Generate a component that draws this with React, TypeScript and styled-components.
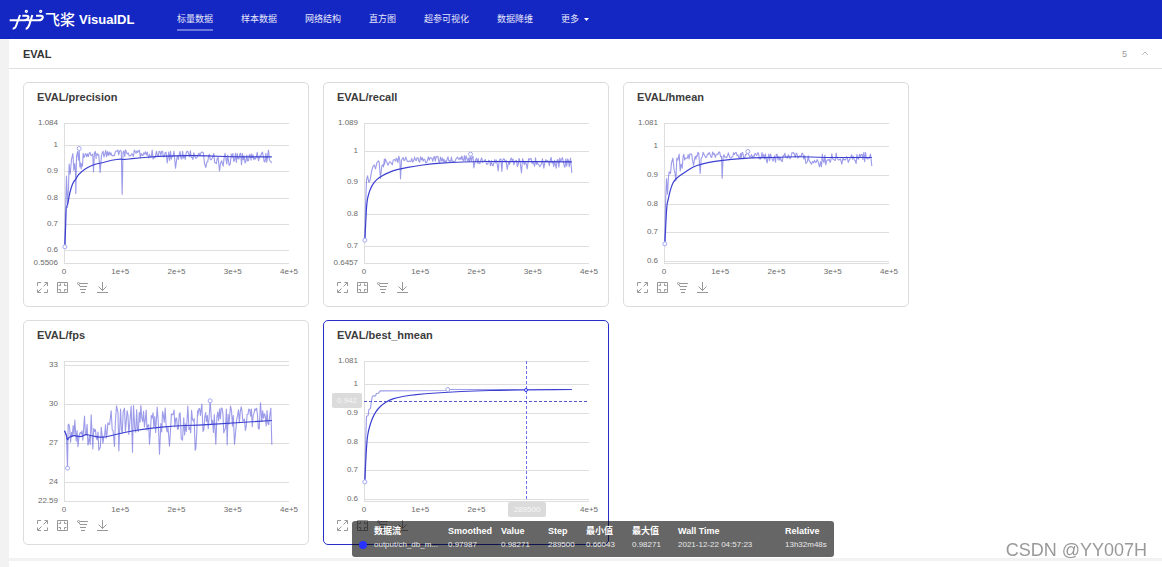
import React from 'react';
import styled, { createGlobalStyle } from 'styled-components';

const GlobalStyle = createGlobalStyle`
  * { box-sizing: border-box; }
  body {
    margin: 0;
    background: #f2f2f2;
    color: #333;
    font-family: "Liberation Sans", "Noto Sans CJK SC", sans-serif;
  }
  button { border: 0; padding: 0; background: none; font: inherit; color: inherit; cursor: pointer; }
`;

const Page = styled.div`
  display: flex;
  flex-direction: column;
  min-height: 100vh;
`;

const Header = styled.header`
  display: flex;
  align-items: center;
  height: 39px;
  padding: 0 9px;
  background: #1527c2;
  color: #fff;
`;

const Brand = styled.a`
  display: flex;
  align-items: center;
  width: 168px;
  color: #fff;
  text-decoration: none;
  white-space: nowrap;
`;

const BrandChinese = styled.span`
  margin: 0 4px 0 1px;
  font-size: 15px;
  line-height: 20px;
  font-weight: 500;
`;

const BrandName = styled.span`
  font-size: 13px;
  line-height: 20px;
  font-weight: 700;
`;

const Nav = styled.nav`
  display: flex;
  gap: 28px;
`;

const NavLink = styled.a<{ $active?: boolean }>`
  display: flex;
  align-items: center;
  gap: 5px;
  height: 22px;
  border-bottom: 2px solid ${(p) => (p.$active ? '#6a76dc' : 'transparent')};
  margin-top: 1px;
  color: #e6e8fa;
  font-size: 9px;
  line-height: 16px;
  text-decoration: none;
  white-space: nowrap;
`;

const Main = styled.main`
  display: flex;
  flex: 1;
  flex-direction: column;
  gap: 3px;
  padding-left: 9px;
`;

const Section = styled.section<{ $fill?: boolean }>`
  flex: ${(p) => (p.$fill ? '1' : 'none')};
  background: #fff;
`;

const SectionHeader = styled.div`
  display: flex;
  align-items: center;
  justify-content: space-between;
  height: 30px;
  padding: 0 13px 0 14px;
  border-bottom: 1px solid #e0e0e0;
`;

const SectionTitle = styled.h2`
  margin: 0;
  font-size: 11px;
  line-height: 16px;
`;

const Toggle = styled.button`
  display: flex;
  align-items: center;
  gap: 14px;
  color: #999;
  font-size: 9px;
  line-height: 12px;
`;

const Grid = styled.div`
  display: grid;
  grid-template-columns: repeat(auto-fill, 286px);
  gap: 13px 14px;
  padding: 13px 14px;
`;

const Card = styled.article<{ $active?: boolean }>`
  position: relative;
  border: 1px solid ${(p) => (p.$active ? '#2731c8' : '#dcdcdc')};
  border-radius: 5px;
  padding-bottom: 12px;
`;

const CardTitle = styled.h3`
  margin: 0;
  padding: 6px 13px;
  color: #3c3c3c;
  font-size: 11px;
  line-height: 16px;
`;

const ChartSvg = styled.svg`
  display: block;
  width: 100%;
  height: 168px;
  overflow: visible;
  font-size: 8px;
  fill: #6b6b6b;
`;

const Tools = styled.div`
  display: flex;
  gap: 8px;
  padding: 3px 13px 0;
`;

const ToolButton = styled.button`
  width: 12px;
  height: 12px;
  color: #8c8c8c;
  svg { display: block; }
`;

const Tooltip = styled.div`
  position: absolute;
  top: 200px;
  left: 28px;
  z-index: 2;
  width: 482px;
  height: 36px;
  border-radius: 3px;
  padding: 3px 7px;
  background: rgba(0, 0, 0, 0.6);
  color: #fff;
`;

const TipTable = styled.table`
  width: 100%;
  border-collapse: collapse;
  table-layout: fixed;
  white-space: nowrap;
  th, td { padding: 0; text-align: left; }
  th { font-size: 9px; line-height: 14px; }
  td { font-size: 8px; line-height: 14px; color: #e8e8e8; }
`;

const Dot = styled.span`
  display: block;
  width: 8px;
  height: 8px;
  border-radius: 50%;
  background: #2932ff;
`;

const Watermark = styled.div`
  position: fixed;
  right: 15px;
  bottom: 6px;
  z-index: 3;
  color: #999;
  font-size: 18px;
  line-height: 22px;
  text-shadow: 1px 1px 0 #fff;
`;

type Point = [number, number];
type Band = [x: number, top: number, bottom: number];

interface Chart {
  title: string;
  ticks: [label: string, y: number][];
  raw: Point[];
  bands: Band[];
  spikes: Point[];
  smoothed: Point[];
  marks: Point[];
  seed: number;
}

/* Series are sampled on a grid with three steps to the pixel. */
const GRID = 3;
const LEFT = 40;
const TOP = 12;
const WIDTH = 225;
const HEIGHT = 140;

const random = (seed: number) => () => {
  seed = (seed * 1664525 + 1013904223) % 4294967296;
  return seed / 4294967296;
};

const at = (x: number, y: number) => `${(x / GRID).toFixed(2)} ${(y / GRID).toFixed(2)}`;

const toPath = (points: Point[]) => points.map(([x, y], i) => `${i ? 'L' : 'M'}${at(x, y)}`).join('');

/* Rounds the corners of a series by running through the middle of each step. */
const toCurve = (points: Point[]) => {
  let d = `M${at(...points[0])}`;
  for (let i = 1; i < points.length - 1; i++) {
    const [x, y] = points[i];
    const [nx, ny] = points[i + 1];
    d += `Q${at(x, y)} ${at((x + nx) / 2, (y + ny) / 2)}`;
  }
  return `${d}L${at(...points[points.length - 1])}`;
};

/* Fills the bands with evaluation noise and merges the outlying steps into it. */
const buildRaw = ({ raw, bands, spikes, seed }: Chart): Point[] => {
  const next = random(seed);
  const out: Point[] = [];
  for (let i = 0; i < bands.length - 1; i++) {
    const [x0, t0, b0] = bands[i];
    const [x1, t1, b1] = bands[i + 1];
    for (let x = x0; x < x1; x += 2.6) {
      if (spikes.some(([sx]) => Math.abs(sx - x) < 2.2)) continue;
      const k = (x - x0) / (x1 - x0);
      const top = t0 + (t1 - t0) * k;
      const bottom = b0 + (b1 - b0) * k;
      out.push([x, top + (bottom - top) * next()]);
    }
  }
  return [...raw, ...[...out, ...spikes].sort((a, b) => a[0] - b[0])];
};

const charts: Chart[] = [
  {
    title: 'EVAL/precision',
    ticks: [['1.084', 0], ['1', 22], ['0.9', 48], ['0.8', 75], ['0.7', 101], ['0.6', 127], ['0.5506', 140]],
    raw: [[1, 370], [3, 260], [6, 158], [9, 252], [12, 190], [14, 122], [17, 152], [21, 108], [25, 90], [28, 140], [31, 120], [33, 150], [34, 210], [36, 100], [39, 84], [42, 110], [44, 75], [46, 130], [48, 118], [50, 136], [52, 120], [54, 128]],
    bands: [[56, 84, 106], [95, 82, 108], [160, 78, 102], [250, 78, 104], [305, 82, 112], [375, 78, 108], [440, 90, 120], [500, 88, 124], [560, 88, 116], [622, 82, 116]],
    spikes: [[87, 145], [107, 147], [173, 212], [308, 118], [333, 134], [336, 112], [420, 120], [424, 132], [465, 142], [468, 120], [476, 128], [494, 126], [531, 124], [582, 112], [612, 80], [622, 118]],
    smoothed: [[1, 370], [3, 325], [5, 246], [9, 246], [12, 230], [16, 206], [24, 181], [30, 171], [34, 168], [42, 152], [57, 140], [72, 130], [92, 122], [112, 118], [142, 110], [170, 106], [174, 109], [232, 102], [282, 99], [332, 97], [397, 96], [452, 98], [512, 100], [622, 100]],
    marks: [[1, 370], [44, 75]],
    seed: 17,
  },
  {
    title: 'EVAL/recall',
    ticks: [['1.089', 0], ['1', 28], ['0.9', 59], ['0.8', 91], ['0.7', 123], ['0.6457', 140]],
    raw: [[1, 350], [3, 250], [6, 170], [9, 157], [13, 176], [17, 170], [21, 144], [25, 130], [29, 124], [33, 136], [37, 118], [42, 112]],
    bands: [[44, 108, 144], [60, 105, 134], [95, 100, 122], [150, 100, 120], [240, 96, 118], [310, 96, 114], [365, 102, 126], [430, 103, 130], [500, 103, 130], [622, 100, 132]],
    spikes: [[48, 165], [103, 98], [106, 110], [108, 166], [111, 110], [318, 92], [328, 133], [332, 112], [401, 142], [412, 144], [428, 138], [471, 148], [488, 136], [538, 134], [575, 134], [618, 104], [622, 148]],
    smoothed: [[1, 350], [4, 290], [7, 235], [12, 212], [20, 190], [30, 175], [42, 163], [60, 153], [85, 142], [110, 135], [150, 128], [200, 121], [260, 117], [330, 114], [400, 114], [622, 115]],
    marks: [[1, 350], [318, 92]],
    seed: 4,
  },
  {
    title: 'EVAL/hmean',
    ticks: [['1.081', 0], ['1', 23], ['0.9', 52], ['0.8', 81], ['0.7', 109], ['0.6', 138]],
    raw: [[1, 361], [3, 240], [6, 165], [9, 212], [12, 160], [14, 145], [18, 150], [21, 118], [25, 104], [29, 140], [32, 152], [34, 172], [37, 104], [40, 110], [44, 92], [47, 142], [50, 122], [53, 134], [56, 98]],
    bands: [[58, 86, 112], [95, 86, 108], [150, 85, 102], [230, 86, 106], [305, 86, 108], [330, 88, 118], [400, 86, 112], [450, 90, 120], [520, 88, 120], [622, 86, 118]],
    spikes: [[87, 126], [107, 150], [110, 104], [171, 98], [173, 164], [176, 100], [250, 84], [308, 118], [333, 116], [424, 120], [441, 122], [465, 130], [471, 130], [484, 124], [532, 122], [575, 120], [618, 92], [622, 128]],
    smoothed: [[1, 361], [4, 300], [7, 243], [12, 225], [16, 205], [22, 186], [28, 173], [40, 160], [60, 147], [85, 130], [110, 122], [150, 113], [200, 108], [260, 103], [330, 102], [400, 99], [480, 102], [622, 102]],
    marks: [[1, 361], [250, 84]],
    seed: 29,
  },
  {
    title: 'EVAL/fps',
    ticks: [['', 0], ['33', 4], ['30', 43], ['27', 82], ['24', 121], ['22.59', 140]],
    raw: [[0, 208], [3, 214], [6, 225], [9, 320], [11, 190]],
    bands: [[13, 188, 238], [30, 190, 252], [50, 185, 265], [60, 165, 225], [72, 190, 262], [105, 195, 268], [125, 180, 235], [150, 145, 225], [180, 140, 220], [250, 145, 215], [300, 140, 215], [350, 150, 235], [400, 138, 220], [470, 138, 215], [540, 142, 210], [622, 138, 210]],
    spikes: [[13, 188], [31, 176], [60, 164], [80, 160], [103, 266], [140, 148], [150, 255], [156, 133], [163, 268], [180, 140], [200, 134], [204, 272], [207, 132], [229, 132], [255, 248], [278, 137], [285, 278], [302, 140], [315, 254], [354, 236], [370, 134], [392, 266], [394, 262], [412, 128], [437, 118], [454, 248], [488, 250], [498, 134], [510, 248], [530, 136], [588, 124], [619, 140], [622, 250]],
    smoothed: [[0, 208], [6, 220], [9, 238], [12, 228], [20, 225], [30, 221], [48, 227], [64, 218], [80, 223], [110, 228], [130, 225], [165, 216], [210, 207], [270, 199], [330, 193], [400, 191], [480, 186], [622, 177]],
    marks: [[9, 320], [437, 118]],
    seed: 52,
  },
  {
    title: 'EVAL/best_hmean',
    ticks: [['1.081', 0], ['1', 23], ['0.9', 52], ['0.8', 81], ['0.7', 109], ['0.6', 138]],
    raw: [[1, 361], [4, 220], [6, 165], [11, 162], [13, 145], [18, 140], [20, 125], [23, 106], [26, 103], [33, 103], [36, 96], [42, 95], [47, 88], [244, 87], [250, 84], [622, 84]],
    bands: [],
    spikes: [],
    smoothed: [[1, 361], [4, 290], [8, 230], [12, 208], [18, 185], [28, 160], [40, 142], [55, 128], [75, 115], [100, 108], [130, 102], [180, 97], [250, 92], [330, 88], [420, 86], [520, 85], [622, 84]],
    marks: [[1, 361], [250, 84]],
    seed: 1,
  },
];

const xTicks = ['0', '1e+5', '2e+5', '3e+5', '4e+5'];
const hovered = 'EVAL/best_hmean';
/* The step label of the pointer takes the place of this tick. */
const coveredTick = '3e+5';

const Crosshair = () => (
  <g>
    <path d="M162 0V140" stroke="#6a70ea" strokeDasharray="3 2" shapeRendering="crispEdges" />
    <path d="M0 40H225" stroke="#5458c4" strokeDasharray="3 2" shapeRendering="crispEdges" />
    <circle cx={162} cy={29} r={1.5} fill="#fff" stroke="#2932e1" />
    <rect x={-32} y={32} width={30} height={15} rx={2} fill="#dbdbdb" />
    <text x={-17} y={42} textAnchor="middle" fill="#f7f7f7">0.942</text>
    <rect x={144} y={141} width={38} height={15} rx={2} fill="#dbdbdb" />
    <text x={163} y={151} textAnchor="middle" fill="#f7f7f7">289500</text>
  </g>
);

const LineChart = ({ chart }: { chart: Chart }) => {
  const active = chart.title === hovered;
  return (
    <ChartSvg role="img" aria-label={chart.title}>
      <g transform={`translate(${LEFT} ${TOP})`}>
        <g stroke="#dedede" shapeRendering="crispEdges">
          {chart.ticks.map(([label, y]) => <line key={label} x1={0} x2={WIDTH} y1={y} y2={y} />)}
          <line x1={0} x2={0} y1={0} y2={HEIGHT} />
          <line x1={0} x2={WIDTH} y1={HEIGHT} y2={HEIGHT} />
        </g>
        {chart.ticks.map(([label, y]) => (
          <text key={label} x={-6} y={y + 2} textAnchor="end">{label}</text>
        ))}
        {xTicks.map((label, i) =>
          active && label === coveredTick ? null : (
            <text key={label} x={(WIDTH / 4) * i} y={151} textAnchor="middle">{label}</text>
          ),
        )}
        <g fill="none" strokeLinejoin="round" transform="translate(0.5 0.5)">
          <path d={toPath(buildRaw(chart))} stroke="#3a38d6" strokeOpacity={0.5} strokeWidth={1.1} />
          <path d={toCurve(chart.smoothed)} stroke="#3c40d0" strokeWidth={1.2} />
          {chart.marks.map(([x, y]) => (
            <circle key={x} cx={x / GRID} cy={y / GRID} r={2} fill="#fff" stroke="#a4a8f2" />
          ))}
        </g>
        {active && <Crosshair />}
      </g>
    </ChartSvg>
  );
};

const tools: { label: string; d: string }[] = [
  { label: '最大化', d: 'M.5 4V.5H4M7.5 .5H10.5V4M10.5 7.5V10.5H7M4 10.5H.5V7.5M6.5 4.5L10 1M4.5 6.5L1 10' },
  { label: '还原', d: 'M.5 .5H10.5V10.5H.5ZM3.5 1.5V3.5H1.5M7.5 1.5V3.5H9.5M3.5 9.5V7.5H1.5M7.5 9.5V7.5H9.5' },
  { label: '对数坐标', d: 'M3 1.5H11M3 4.5H10M3 7.5H9M4 10.5H8M.5 1.5A1 1 0 1 0 2.5 1.5A1 1 0 1 0 .5 1.5M2 2.5L3 4.5' },
  { label: '下载', d: 'M5.5 0V8.5M1.5 4.5L5.5 8.5L9.5 4.5M0 10.5H11' },
];

const CardTools = () => (
  <Tools>
    {tools.map((tool) => (
      <ToolButton key={tool.label} type="button" aria-label={tool.label}>
        <svg width="12" height="12" viewBox="0 0 12 12" fill="none" stroke="currentColor" strokeWidth="0.9">
          <path d={tool.d} />
        </svg>
      </ToolButton>
    ))}
  </Tools>
);

const tipColumns: [name: string, value: string, width: number][] = [
  ['数据流', 'output/ch_db_m...', 74],
  ['Smoothed', '0.97987', 53],
  ['Value', '0.98271', 47],
  ['Step', '289500', 38],
  ['最小值', '0.66043', 46],
  ['最大值', '0.98271', 46],
  ['Wall Time', '2021-12-22 04:57:23', 107],
  ['Relative', '13h32m48s', 42],
];

const HoverTooltip = () => (
  <Tooltip role="tooltip">
    <TipTable>
      <colgroup>
        <col width={15} />
        {tipColumns.map(([name, , width]) => <col key={name} width={width} />)}
      </colgroup>
      <thead>
        <tr>
          <th />
          {tipColumns.map(([name]) => <th key={name}>{name}</th>)}
        </tr>
      </thead>
      <tbody>
        <tr>
          <td><Dot /></td>
          {tipColumns.map(([name, value]) => <td key={name}>{value}</td>)}
        </tr>
      </tbody>
    </TipTable>
  </Tooltip>
);

const Logo = () => (
  <svg width="35" height="21" viewBox="27 25 105 63" fill="none" stroke="#fff" strokeWidth="6" aria-hidden="true">
    <path d="M29 59H72Q82 59 85 52Q87 45 79 45H67M60 43L48 76Q45 84 38 84M97 43L88 72Q84 84 77 84M82 59H116Q125 59 128 52Q130 45 122 45H108" />
    <circle cx="79" cy="32" r="2" />
    <circle cx="122" cy="32" r="2" />
  </svg>
);

const navItems = ['标量数据', '样本数据', '网络结构', '直方图', '超参可视化', '数据降维'];

const App = () => (
  <Page>
    <GlobalStyle />
    <Header>
      <Brand href="#">
        <Logo />
        <BrandChinese>飞桨</BrandChinese>
        <BrandName>VisualDL</BrandName>
      </Brand>
      <Nav>
        {navItems.map((item, i) => <NavLink key={item} href="#" $active={i === 0}>{item}</NavLink>)}
        <NavLink href="#">
          更多
          <svg width="5" height="3" viewBox="0 0 5 3" fill="#fff" aria-hidden="true"><path d="M0 0H5L2.5 3Z" /></svg>
        </NavLink>
      </Nav>
    </Header>
    <Main>
      <Section>
        <SectionHeader>
          <SectionTitle>EVAL</SectionTitle>
          <Toggle type="button" aria-expanded="true">
            5
            <svg width="8" height="5" viewBox="0 0 8 5" fill="none" stroke="#bbb" aria-hidden="true"><path d="M1 4L4 1L7 4" /></svg>
          </Toggle>
        </SectionHeader>
        <Grid>
          {charts.map((chart) => (
            <Card key={chart.title} $active={chart.title === hovered}>
              <CardTitle>{chart.title}</CardTitle>
              <LineChart chart={chart} />
              <CardTools />
              {chart.title === hovered && <HoverTooltip />}
            </Card>
          ))}
        </Grid>
      </Section>
      <Section $fill />
    </Main>
    <Watermark>CSDN @YY007H</Watermark>
  </Page>
);

export default App;
